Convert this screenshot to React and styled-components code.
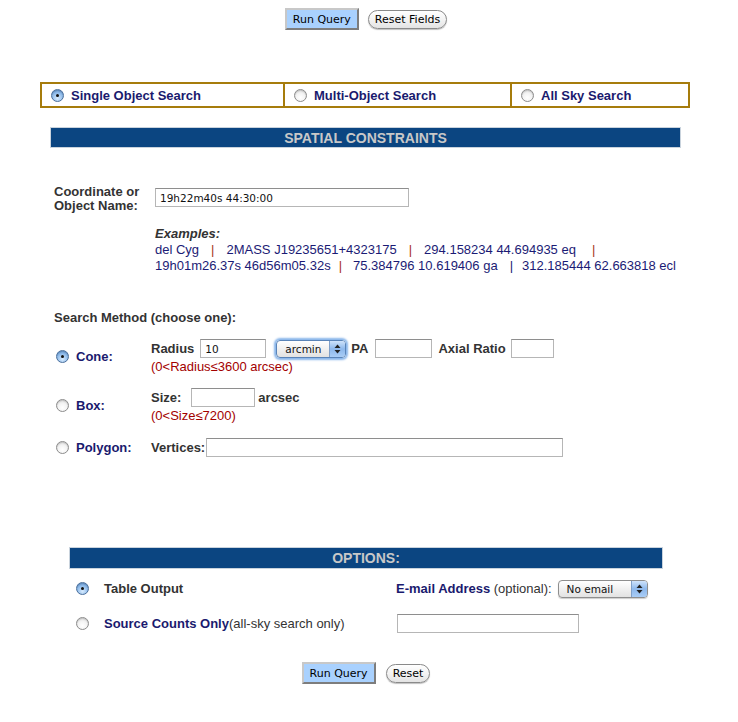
import React from 'react';
import styled, { createGlobalStyle, css } from 'styled-components';

const Global = createGlobalStyle`
  html, body { margin: 0; padding: 0; background: #fff; }
  body { font-family: "Liberation Sans", Arial, sans-serif; color: #333; }
`;

const Page = styled.form`
  width: 738px;
  padding-top: 8px;
  padding-bottom: 30px;
`;

const ButtonRow = styled.div`
  display: flex;
  justify-content: center;
  align-items: center;
  gap: ${(p) => p.gap || 9}px;
  padding-right: ${(p) => p.shift || 0}px;
  margin-top: ${(p) => p.top || 0}px;
`;

const SubmitButton = styled.button`
  height: 22px;
  padding: 0 6px;
  font-family: "DejaVu Sans", sans-serif;
  font-size: 11px;
  color: #000;
  background: #a9d1fe;
  border: 2px solid;
  border-color: #c8c8c8 #7d7d7d #7d7d7d #c8c8c8;
  box-sizing: border-box;
`;

const PillButton = styled.button`
  height: 19px;
  padding: 0 6px;
  font-family: "DejaVu Sans", sans-serif;
  font-size: 11px;
  color: #000;
  background: linear-gradient(#ffffff, #f2f2f2 55%, #e3e3e3);
  border: 1px solid #8a8a8a;
  border-radius: 10px;
  box-shadow: 0 1px 1px rgba(0, 0, 0, 0.25);
`;

const Tabs = styled.div`
  display: grid;
  grid-template-columns: 241px 227px 1fr;
  margin: 52px 0 0 40px;
  width: 650px;
  height: 26px;
  box-sizing: border-box;
  border: 2px solid #a67c0c;
`;

const Tab = styled.label`
  display: flex;
  align-items: center;
  gap: 7px;
  padding-left: 9px;
  font-size: 13px;
  font-weight: bold;
  color: #1a1a6e;
  & + & { border-left: 2px solid #a67c0c; }
`;

const Radio = styled.span`
  display: inline-block;
  flex: none;
  width: 13px;
  height: 13px;
  border-radius: 50%;
  box-sizing: border-box;
  border: 1px solid #8c8c8c;
  background: radial-gradient(circle at 50% 70%, #ffffff 0%, #f4f4f4 45%, #d6d6d6 100%);
  box-shadow: inset 0 1px 1px rgba(0, 0, 0, 0.15);
  position: relative;
  ${(p) =>
    p.checked &&
    css`
      border-color: #4a6f9c;
      background: radial-gradient(circle at 50% 75%, #d8ecff 0%, #8fbbea 55%, #5b8fcb 100%);
      &::after {
        content: '';
        position: absolute;
        left: 4px;
        top: 4px;
        width: 3px;
        height: 3px;
        border-radius: 50%;
        background: #111;
      }
    `}
`;

const SectionBar = styled.div`
  margin: ${(p) => p.top}px 0 0 ${(p) => p.left}px;
  width: ${(p) => p.width}px;
  height: ${(p) => p.height || 21}px;
  box-sizing: border-box;
  border: 1px solid #c9d3dd;
  background: #0b4581;
  color: #c8c8c8;
  font-size: 14px;
  font-weight: bold;
  display: flex;
  align-items: center;
  justify-content: center;
`;

const FieldRow = styled.div`
  display: flex;
  align-items: flex-start;
  margin: ${(p) => p.top || 0}px 0 0 54px;
`;

const SideLabel = styled.div`
  width: 101px;
  font-size: 13px;
  font-weight: bold;
  line-height: 14px;
  color: #333;
`;

const TextBox = styled.input`
  width: ${(p) => p.w}px;
  height: 19px;
  box-sizing: border-box;
  margin: ${(p) => p.m || 0};
  padding: 0 4px;
  border: 1px solid #b6b6b6;
  border-top-color: #8e8e8e;
  font-family: "DejaVu Sans", sans-serif;
  font-size: 10.5px;
  color: #111;
  background: #fff;
`;

const Examples = styled.div`
  margin: 13px 0 0 155px;
  font-size: 13px;
  line-height: 16px;
  color: #1b1b75;
`;

const ExampleTitle = styled.div`
  font-weight: bold;
  font-style: italic;
  color: #333;
`;

// separators between examples; spacing on each side differs a little
const Sep = styled.span`
  color: ${(p) => (p.navy ? '#1b1b75' : '#a8321e')};
  padding: 0 ${(p) => p.r ?? 12}px 0 ${(p) => p.l ?? 12}px;
`;

const Heading = styled.div`
  margin: 36px 0 0 54px;
  font-size: 13px;
  font-weight: bold;
  color: #333;
`;

const MethodRow = styled.div`
  display: grid;
  grid-template-columns: 20px 75px 1fr;
  align-items: center;
  margin: ${(p) => p.top}px 0 0 56px;
`;

const MethodName = styled.span`
  font-size: 13px;
  font-weight: bold;
  color: #1a1a6e;
`;

const MethodBody = styled.div`
  display: flex;
  flex-direction: column;
`;

const Inline = styled.div`
  display: flex;
  align-items: center;
  font-size: 13px;
  font-weight: bold;
  color: #333;
`;

const Note = styled.div`
  font-size: 13px;
  color: #a30000;
  margin-top: 1px;
`;

const SelectBox = styled.div`
  display: flex;
  align-items: center;
  width: ${(p) => p.w}px;
  height: 18px;
  box-sizing: border-box;
  margin: ${(p) => p.m || 0};
  border: 1px solid ${(p) => (p.focus ? '#5a84b8' : '#8e8e8e')};
  border-radius: 4px;
  background: linear-gradient(#ffffff, #f0f0f0 50%, #e2e2e2);
  box-shadow: ${(p) => (p.focus ? '0 0 2px 2px #8ab6ea' : '0 1px 1px rgba(0,0,0,0.2)')};
  font-family: "DejaVu Sans", sans-serif;
  font-size: 10.5px;
  font-weight: normal;
  color: #111;
  overflow: hidden;
`;

const SelectText = styled.span`
  flex: 1;
  padding-left: ${(p) => p.pad || 8}px;
`;

const SelectArrows = styled.span`
  width: 15px;
  height: 100%;
  display: flex;
  align-items: center;
  justify-content: center;
  background: linear-gradient(#cfe3fb, #8db8ec 50%, #a9cdf6);
  border-left: 1px solid #7f9fc8;
`;

const Arrows = () => (
  <svg width="7" height="10" viewBox="0 0 7 10">
    <path d="M3.5 0.5 L6.5 4 L0.5 4 Z" fill="#222" />
    <path d="M0.5 6 L6.5 6 L3.5 9.5 Z" fill="#222" />
  </svg>
);

const OptionGrid = styled.div`
  display: grid;
  grid-template-columns: 28px 292px 1fr;
  row-gap: 16px;
  align-items: center;
  margin: 10px 0 0 76px;
`;

const OptionLabel = styled.span`
  font-size: 13px;
  font-weight: bold;
  color: ${(p) => (p.navy ? '#1a1a6e' : '#333')};
`;

const Plain = styled.span`
  font-weight: normal;
  color: #333;
`;

const OptionRight = styled.div`
  display: flex;
  align-items: center;
  height: 19px;
`;

const Select = ({ value, w, m, focus, pad }) => (
  <SelectBox w={w} m={m} focus={focus}>
    <SelectText pad={pad}>{value}</SelectText>
    <SelectArrows>
      <Arrows />
    </SelectArrows>
  </SelectBox>
);

export default function App() {
  return (
    <>
      <Global />
      <Page onSubmit={(e) => e.preventDefault()}>
        <ButtonRow shift={6}>
          <SubmitButton type="submit">Run Query</SubmitButton>
          <PillButton type="reset">Reset Fields</PillButton>
        </ButtonRow>

        <Tabs>
          <Tab><Radio checked />Single Object Search</Tab>
          <Tab><Radio />Multi-Object Search</Tab>
          <Tab><Radio />All Sky Search</Tab>
        </Tabs>

        <SectionBar top={19} left={50} width={631}>SPATIAL CONSTRAINTS</SectionBar>

        <FieldRow top={37}>
          <SideLabel>Coordinate or<br />Object Name:</SideLabel>
          <TextBox w={254} m="3px 0 0 0" defaultValue="19h22m40s 44:30:00" />
        </FieldRow>

        <Examples>
          <ExampleTitle>Examples:</ExampleTitle>
          <div>
            del Cyg<Sep>|</Sep>2MASS J19235651+4323175<Sep l={12} r={12}>|</Sep>294.158234 44.694935 eq<Sep l={16}>|</Sep>
          </div>
          <div>
            19h01m26.37s 46d56m05.32s<Sep l={8} r={11}>|</Sep>75.384796 10.619406 ga<Sep navy l={12} r={9}>|</Sep>312.185444 62.663818 ecl
          </div>
        </Examples>

        <Heading>Search Method (choose one):</Heading>

        <MethodRow top={14}>
          <Radio checked />
          <MethodName>Cone:</MethodName>
          <MethodBody>
            <Inline>
              Radius
              <TextBox w={66} m="0 0 0 6px" defaultValue="10" />
              <Select value="arcmin" w={70} m="0 5px 0 10px" focus />
              PA
              <TextBox w={57} m="0 6px 0 7px" />
              Axial Ratio
              <TextBox w={43} m="0 0 0 5px" />
            </Inline>
            <Note>(0&lt;Radius≤3600 arcsec)</Note>
          </MethodBody>
        </MethodRow>

        <MethodRow top={14}>
          <Radio />
          <MethodName>Box:</MethodName>
          <MethodBody>
            <Inline>
              Size:
              <TextBox w={64} m="0 3px 0 10px" />
              arcsec
            </Inline>
            <Note>(0&lt;Size≤7200)</Note>
          </MethodBody>
        </MethodRow>

        <MethodRow top={15}>
          <Radio />
          <MethodName>Polygon:</MethodName>
          <MethodBody>
            <Inline>
              Vertices:
              <TextBox w={357} m="0 0 0 1px" />
            </Inline>
          </MethodBody>
        </MethodRow>

        <SectionBar top={90} left={69} width={594} height={22}>OPTIONS:</SectionBar>

        <OptionGrid>
          <Radio checked />
          <OptionLabel>Table Output</OptionLabel>
          <OptionRight>
            <OptionLabel navy>E-mail Address <Plain>(optional):</Plain></OptionLabel>
            <Select value="No email" w={90} m="0 0 0 6px" pad={8} />
          </OptionRight>

          <Radio />
          <OptionLabel navy>Source Counts Only<Plain>(all-sky search only)</Plain></OptionLabel>
          <OptionRight>
            <TextBox w={182} m="0 0 0 1px" />
          </OptionRight>
        </OptionGrid>

        <ButtonRow top={29} gap={10} shift={6}>
          <SubmitButton type="submit">Run Query</SubmitButton>
          <PillButton type="reset">Reset</PillButton>
        </ButtonRow>
      </Page>
    </>
  );
}
